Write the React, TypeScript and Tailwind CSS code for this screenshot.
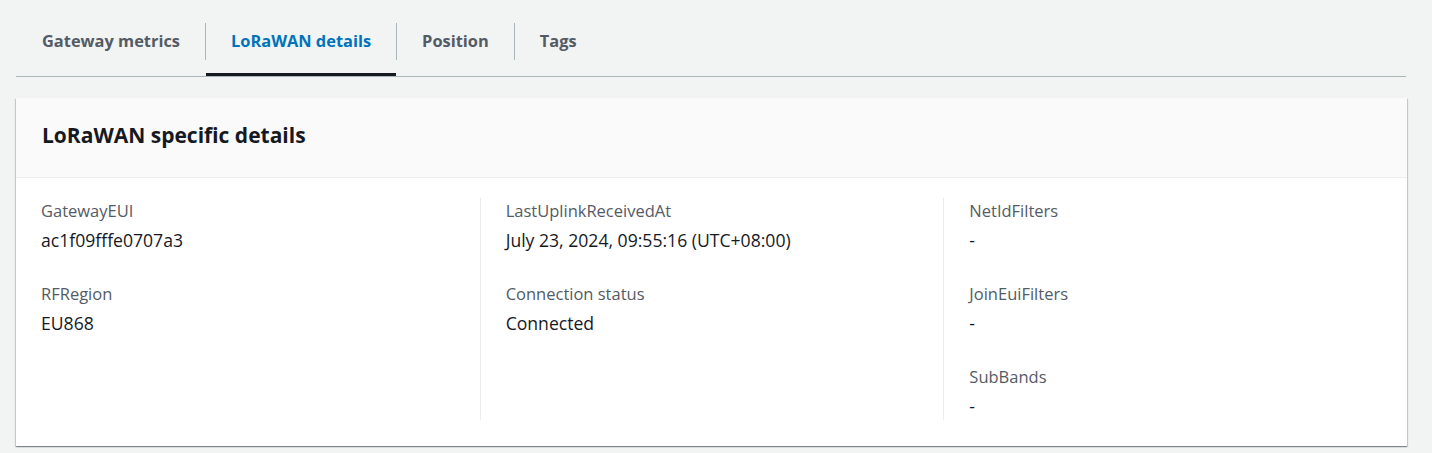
import React from 'react';

const tabs = ['Gateway metrics', 'LoRaWAN details', 'Position', 'Tags'];

const columns = [
  [
    { label: 'GatewayEUI', value: 'ac1f09fffe0707a3' },
    { label: 'RFRegion', value: 'EU868' },
  ],
  [
    { label: 'LastUplinkReceivedAt', value: 'July 23, 2024, 09:55:16 (UTC+08:00)' },
    { label: 'Connection status', value: 'Connected' },
  ],
  [
    { label: 'NetIdFilters', value: '-' },
    { label: 'JoinEuiFilters', value: '-' },
    { label: 'SubBands', value: '-' },
  ],
];

export default function App() {
  return (
    <div className="min-h-screen bg-[#f2f3f3] px-[16px] font-['Open_Sans',sans-serif] text-[#16191f]">
      {/* Tabs */}
      <div className="flex w-[1390px] border-b border-[#aab7b8]">
        {tabs.map((t, i) => (
          <React.Fragment key={t}>
            {i > 0 && <div className="mt-[23px] h-[37px] w-px self-start bg-[#aab7b8]" />}
            <div
              className={`relative flex h-[76px] items-center pt-[7px] text-[16.4px] font-bold ${
                i === 0 ? 'pl-[26px] pr-[25px]' : 'px-[25px]'
              } ${i === 1 ? 'text-[#0073bb]' : 'text-[#545b64]'}`}
            >
              {t}
              {i === 1 && <div className="absolute bottom-0 left-0 right-0 h-[3px] bg-[#16191f]" />}
            </div>
          </React.Fragment>
        ))}
      </div>

      {/* Card */}
      <div className="mt-[21px] w-[1391px] bg-white shadow-[0_1px_1px_0_rgba(0,28,36,0.3),1px_1px_1px_0_rgba(0,28,36,0.15),-1px_1px_1px_0_rgba(0,28,36,0.15)]">
        <div className="flex h-[80px] items-center border-b border-[#eaeded] bg-[#fafafa] pb-[4px] pl-[26px]">
          <h2 className="text-[21px] font-bold">LoRaWAN specific details</h2>
        </div>
        <div className="grid grid-cols-3 pb-[26px] pt-[20px]">
          {columns.map((col, ci) => (
            <div
              key={ci}
              className={`h-[222px] pl-[25px] pt-[2px] ${ci > 0 ? 'border-l border-[#eaeded]' : ''}`}
            >
              {col.map((f, fi) => (
                <div key={f.label} className={fi > 0 ? 'mt-[32px]' : ''}>
                  <div className="text-[16.5px] leading-[22px] text-[#545b64]">{f.label}</div>
                  <div className="mt-[7px] text-[17.6px] leading-[22px]">{f.value}</div>
                </div>
              ))}
            </div>
          ))}
        </div>
      </div>
    </div>
  );
}
